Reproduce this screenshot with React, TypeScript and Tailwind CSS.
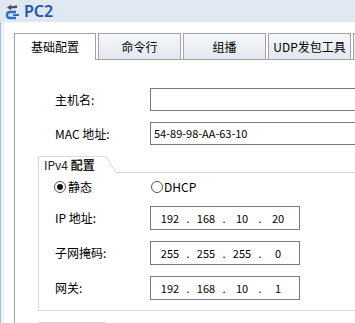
import React from "react";

const font = { fontFamily: '"Noto Sans CJK SC", "Noto Sans", sans-serif' };

function Tab({ label, active, w }: { label: string; active?: boolean; w: string }) {
  return (
    <div
      className={
        "shrink-0 flex items-center justify-center border-t border-l border-r border-[#a3a3a3] text-[12px] text-black " +
        w +
        (active
          ? " h-[27px] -mb-px bg-white relative z-10"
          : " h-[26px] bg-gradient-to-b from-[#f5f7fa] to-[#e3e8ef]")
      }
    >
      {label}
    </div>
  );
}

function Radio({ checked }: { checked?: boolean }) {
  return (
    <div className="shrink-0 w-[12px] h-[12px] rounded-full border border-[#555] bg-white flex items-center justify-center">
      {checked && <div className="w-[6px] h-[6px] rounded-full bg-[#111]" />}
    </div>
  );
}

function IpBox({ parts }: { parts: string[] }) {
  return (
    <div className="shrink-0 w-[150px] h-[24px] border border-[#7a7a7a] flex items-center pl-[5px] text-[11px] text-black">
      {parts.map((p, i) => (
        <React.Fragment key={i}>
          <div className="w-[28px] text-center">{p}</div>
          {i < 3 && <div className="w-[8px] text-center">.</div>}
        </React.Fragment>
      ))}
    </div>
  );
}

export default function App() {
  return (
    <div className="w-[355px] h-[323px] overflow-hidden bg-[#dfe8f3] flex flex-col" style={font}>
      {/* title bar */}
      <div className="h-[22px] flex items-center pl-[4px] shrink-0">
        <svg width="16" height="17" viewBox="0 0 16 17" className="mr-[4px] shrink-0">
          <path d="M3 4.5 L7 1.5 L7 3.2 L13 2.6 L13 5 L7 5.6 L7 7.2 Z" fill="#4a4f57" />
          <path d="M12 9 H6 Q3 9 3 12 Q3 15 6 15 H12" fill="none" stroke="#2d6fc4" strokeWidth="2.4" />
          <path d="M9 12 H15" stroke="#2d6fc4" strokeWidth="2" />
        </svg>
        <span
          className="text-[16px] leading-none text-[#2158a6] font-semibold"
          style={{ fontFamily: '"Noto Sans", sans-serif' }}
        >
          PC2
        </span>
      </div>
      {/* body */}
      <div className="flex flex-1 min-w-0">
        <div className="shrink-0 w-[4px] border-l border-[#a3bedd] bg-[#ebf2fa]" />
        <div className="flex-1 min-w-0 bg-white pl-[10px] pt-[11px] flex flex-col">
          {/* tabs */}
          <div className="flex gap-[2px] border-b border-[#a3a3a3] items-end shrink-0">
            <Tab label="基础配置" active w="w-[82px]" />
            <Tab label="命令行" w="w-[83px]" />
            <Tab label="组播" w="w-[83px]" />
            <Tab label="UDP发包工具" w="w-[83px]" />
            <Tab label="" w="w-[20px]" />
          </div>
          {/* content */}
          <div className="flex-1 border-l border-[#a3a3a3] flex flex-col pt-[28px]">
            <div className="flex items-center h-[23px] pl-[40px] text-[12px] text-black">
              <div className="shrink-0 w-[95px]">主机名:</div>
              <div className="shrink-0 w-[220px] h-[23px] border border-[#7a7a7a]" />
            </div>
            <div className="flex items-center h-[23px] mt-[11px] pl-[40px] text-[12px] text-black">
              <div className="shrink-0 w-[95px]">MAC 地址:</div>
              <div className="shrink-0 w-[220px] h-[23px] border border-[#7a7a7a] text-[11px] flex items-center pl-[3px]">
                54-89-98-AA-63-10
              </div>
            </div>
            {/* IPv4 group */}
            <div className="ml-[23px] mt-[11px] border-l border-b border-[#d9d9d9] pb-[10px]">
              <div className="flex h-[17px]">
                <div className="shrink-0 w-[67px] border-t border-[#d9d9d9] text-[12px] leading-[15px] pl-[5px] text-[#222]">
                  IPv4 <span className="font-bold">配置</span>
                </div>
                <svg width="10" height="17" className="shrink-0">
                  <line x1="0" y1="0.5" x2="10" y2="16.5" stroke="#d9d9d9" strokeWidth="1" />
                </svg>
                <div className="flex-1 border-b border-[#d9d9d9]" />
              </div>
              <div className="flex items-center pl-[15px] mt-[8px] h-[12px] text-[12px] text-black">
                <div className="shrink-0 w-[97px] flex items-center gap-[2px]">
                  <Radio checked />
                  <span>静态</span>
                </div>
                <div className="flex items-center gap-[1px]">
                  <Radio />
                  <span>DHCP</span>
                </div>
              </div>
              <div className="flex items-center pl-[16px] mt-[13px] text-[12px] text-black">
                <div className="shrink-0 w-[95px]">IP 地址:</div>
                <IpBox parts={["192", "168", "10", "20"]} />
              </div>
              <div className="flex items-center pl-[16px] mt-[11px] text-[12px] text-black">
                <div className="shrink-0 w-[95px]">子网掩码:</div>
                <IpBox parts={["255", "255", "255", "0"]} />
              </div>
              <div className="flex items-center pl-[16px] mt-[11px] text-[12px] text-black">
                <div className="shrink-0 w-[95px]">网关:</div>
                <IpBox parts={["192", "168", "10", "1"]} />
              </div>
            </div>
            <div className="ml-[23px] mt-[11px] w-[68px] h-[10px] border-t border-l border-r border-[#d9d9d9]" />
          </div>
        </div>
      </div>
    </div>
  );
}
